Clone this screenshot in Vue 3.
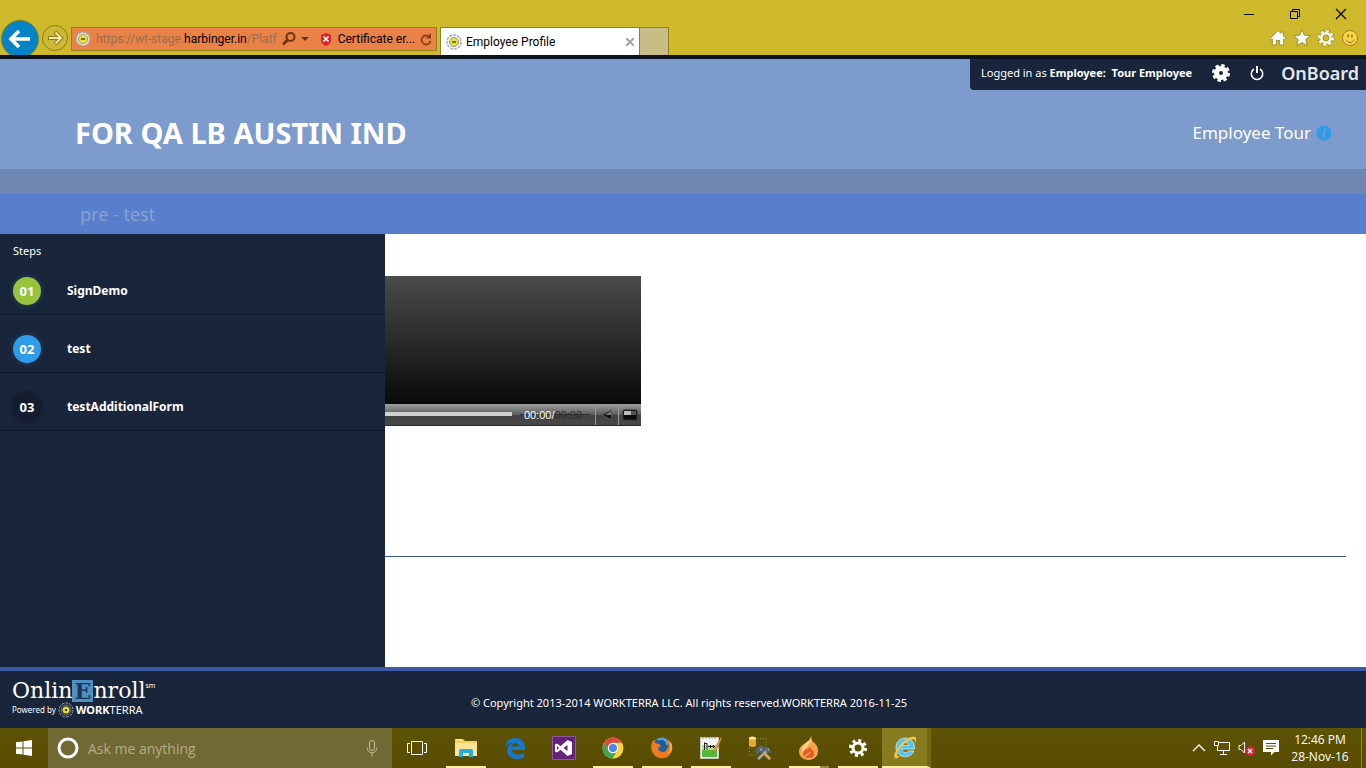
<template>
  <div class="screen">
    <header class="browser">
      <div class="nav-buttons">
        <button class="nav-back" aria-label="Back">
          <svg width="40" height="35" viewBox="0 0 40 35">
            <circle cx="20" cy="19" r="18.5" fill="#0683c6" stroke="#75801f" />
            <path d="M30 19H12M19 11l-8 8 8 8" fill="none" stroke="#fff" stroke-width="3.6" />
          </svg>
        </button>
        <button class="nav-forward" aria-label="Forward">
          <svg width="28" height="28" viewBox="0 0 28 28">
            <circle cx="14" cy="14" r="12.5" fill="#cdb934" stroke="#8d7d1b" />
            <path d="M7 14h13M14 8l6 6-6 6" fill="none" stroke="#8d7d1b" stroke-width="4" />
            <path d="M8 14h11M14.500 8.500l5.500 5.500-5.500 5.500" fill="none" stroke="#f3e9a4" stroke-width="2" />
          </svg>
        </button>
      </div>

      <div class="address">
        <svg class="favicon" width="16" height="16" viewBox="0 0 16 16">
          <circle cx="8" cy="8" r="7" fill="#eee0d0" stroke="#aaa092" stroke-width="1.500" stroke-dasharray="3 1" />
          <circle cx="8" cy="8" r="4.500" fill="#e9e13a" stroke="#9b9a83" />
          <path d="M6 8h4" stroke="#77751d" stroke-width="2" />
        </svg>
        <span class="url">https://wt-stage.<b>harbinger.in</b>/Platf</span>
        <button aria-label="Search">
          <svg width="14" height="14" viewBox="0 0 14 14" fill="none" stroke="#6b3512" stroke-width="2">
            <circle cx="8.500" cy="5" r="4" />
            <path d="M5.500 8L1 12.500" stroke-width="2.600" />
          </svg>
        </button>
        <button class="caret" aria-label="Show address list">
          <svg width="8" height="5" viewBox="0 0 8 5"><path d="M0 0h8L4 4z" fill="#6b3512" /></svg>
        </button>
        <button class="certificate">
          <svg width="12" height="13" viewBox="0 0 12 13">
            <path d="M6 0l5 2v5c0 3-2 5-5 6-3-1-5-3-5-6V2z" fill="#d3262b" />
            <path d="M3.500 3.500l5 5M8.500 3.500l-5 5" stroke="#fff" stroke-width="1.600" />
          </svg>
          Certificate er...
        </button>
        <button class="refresh" aria-label="Refresh">
          <svg width="12" height="13" viewBox="0 0 12 13">
            <path d="M9.500 4A4.500 4.500 0 1 0 10.500 8" fill="none" stroke="#8c4017" stroke-width="1.800" />
            <path d="M11 0v5.500H5.500z" fill="#8c4017" />
          </svg>
        </button>
      </div>

      <div class="tab">
        <svg width="16" height="16" viewBox="0 0 16 16">
          <circle cx="8" cy="8" r="7" fill="#fff" stroke="#aaa" stroke-width="1.500" stroke-dasharray="3 1" />
          <circle cx="8" cy="8" r="4.500" fill="#e9e13a" stroke="#8e8f92" />
          <path d="M6 8h4" stroke="#77751d" stroke-width="2" />
        </svg>
        <span>Employee Profile</span>
        <button aria-label="Close tab">
          <svg width="8" height="8" viewBox="0 0 8 8"><path d="M0 0l8 8M8 0L0 8" stroke="#a3a3a3" stroke-width="2" /></svg>
        </button>
      </div>
      <button class="new-tab" aria-label="New tab"></button>

      <div class="window-side">
        <div class="window-controls">
          <button aria-label="Minimize">
            <svg width="12" height="12" viewBox="0 0 12 12"><path d="M1 6.500h10" stroke="#000" /></svg>
          </button>
          <button aria-label="Restore">
            <svg width="12" height="12" viewBox="0 0 12 12" fill="none" stroke="#000">
              <path d="M1.500 3.500h7v7h-7zM3.500 3.500v-2h7v7h-2" />
            </svg>
          </button>
          <button aria-label="Close">
            <svg width="12" height="12" viewBox="0 0 12 12"><path d="M1 1l10 10M11 1L1 11" stroke="#000" stroke-width="1.200" /></svg>
          </button>
        </div>
        <div class="browser-tools">
          <button aria-label="Home">
            <svg width="18" height="18" viewBox="0 0 18 18">
              <path d="M9 1.500l3 2.800V3h2.300v3.500L17 9.700l-1.200 1.200-1.100-1V16h-4v-4.500H7.300V16h-4V9.900l-1.100 1L1 9.700z" fill="#fff" stroke="#8d7d1b" stroke-width=".8" />
            </svg>
          </button>
          <button aria-label="Favorites">
            <svg width="18" height="18" viewBox="0 0 18 18">
              <path d="M9 .5l2.300 5.700 6.200.4-4.700 4 1.500 6.100L9 13.400l-5.300 3.300 1.500-6.100-4.700-4 6.200-.4z" fill="#fff" stroke="#8d7d1b" stroke-width=".8" />
            </svg>
          </button>
          <button aria-label="Tools">
            <svg width="18" height="18" viewBox="0 0 18 18">
              <circle cx="9" cy="9" r="6.700" fill="none" stroke="#8d7d1b" stroke-width="3.600" stroke-dasharray="3.260 2" />
              <circle cx="9" cy="9" r="6.700" fill="none" stroke="#fff" stroke-width="2.600" stroke-dasharray="2.630 2.630" />
              <circle cx="9" cy="9" r="4.500" fill="none" stroke="#fff" stroke-width="2.600" />
              <circle cx="9" cy="9" r="3" fill="none" stroke="#8d7d1b" stroke-width=".6" />
            </svg>
          </button>
          <button aria-label="Send a smile">
            <svg width="18" height="18" viewBox="0 0 18 18">
              <circle cx="9" cy="9" r="7.500" fill="#f9d84a" stroke="#b0791f" />
              <path d="M5 10.500c1.500 4 6.500 4 8 0" fill="none" stroke="#9a6416" />
              <path d="M7 5.500v3M11 5.500v3" stroke="#9a6416" stroke-width="1.500" />
            </svg>
          </button>
        </div>
      </div>
    </header>

    <div class="banner">
      <div class="user-bar">
        <span>Logged in as <b>Employee:&nbsp; Tour Employee</b></span>
        <button aria-label="Settings">
          <svg width="18" height="18" viewBox="0 0 18 18" fill="none" stroke="#fff">
            <circle cx="9" cy="9" r="7.500" stroke-width="3" stroke-dasharray="3.400 2.490" />
            <circle cx="9" cy="9" r="4.500" stroke-width="5" />
          </svg>
        </button>
        <button aria-label="Log out">
          <svg width="14" height="16" viewBox="0 0 14 16" fill="none" stroke="#fff">
            <path d="M4 4a5.700 5.700 0 1 0 6 0" stroke-width="1.500" />
            <path d="M7 1v7" stroke-width="2" />
          </svg>
        </button>
        <span class="brand">OnBoard</span>
      </div>
      <div class="title-row">
        <h1>FOR QA LB AUSTIN IND</h1>
        <a href="#" class="tour">
          Employee Tour
          <svg width="16" height="16" viewBox="0 0 16 16">
            <circle cx="8" cy="8" r="7.500" fill="#309be8" />
            <path d="M9.200 3.300l-.4 2M8.400 6.500L7.200 12.500" stroke="#7a98d0" stroke-width="2" />
          </svg>
        </a>
      </div>
    </div>
    <div class="menu-strip"></div>
    <h2 class="page-title">pre - test</h2>

    <div class="body">
      <nav class="steps">
        <p>Steps</p>
        <ol>
          <li v-for="step in steps" :key="step.number">
            <a href="#">
              <span class="number" :class="step.state">{{ step.number }}</span>
              {{ step.name }}
            </a>
          </li>
        </ol>
      </nav>
      <main>
        <div class="player">
          <div class="video"></div>
          <div class="controls">
            <input type="range" min="0" max="100" value="0" aria-label="Seek">
            <div class="time"><span>00:00/</span><span class="duration">00:00</span></div>
            <button aria-label="Mute">
              <svg width="12" height="12" viewBox="0 0 12 12">
                <path d="M10.500 1v10L1 6z" fill="#111" stroke="#555" />
                <path d="M10 2v4H4z" fill="#777" />
              </svg>
            </button>
            <button aria-label="Full screen">
              <svg width="16" height="12" viewBox="0 0 16 12">
                <rect x="1" y="1" width="14" height="10" rx="1" fill="#0b0b0b" stroke="#333" />
                <path d="M9 2h5v4H9z" fill="#555" />
                <path d="M2 2h7v4H2z" fill="#bbb" />
              </svg>
            </button>
          </div>
        </div>
        <hr>
      </main>
    </div>

    <footer>
      <div class="logo">
        <div class="logo-name">Onlin<span class="logo-e">E</span>nroll<sup>sm</sup></div>
        <div class="powered">
          Powered by
          <svg width="16" height="16" viewBox="0 0 16 16">
            <circle cx="8" cy="8" r="7" fill="none" stroke="#9ba3ad" stroke-dasharray="3 1" />
            <circle cx="8" cy="8" r="5" fill="none" stroke="#6f7887" />
            <circle cx="8" cy="8" r="3.500" fill="#e4dc2c" />
            <path d="M7 8h2" stroke="#333" stroke-width="2" />
          </svg>
          <span class="workterra"><b>WORK</b>TERRA</span>
        </div>
      </div>
      <p>© Copyright 2013-2014 WORKTERRA LLC. All rights reserved.WORKTERRA 2016-11-25</p>
    </footer>

    <div class="taskbar">
      <button class="start" aria-label="Start">
        <svg width="16" height="16" viewBox="0 0 16 16" fill="#fff">
          <path d="M0 2.300l6.500-.9v6.100H0zM7.500 1.200L16 0v7.500H7.500zM0 8.500h6.500v6.100L0 13.700zM7.500 8.500H16V16l-8.500-1.200z" />
        </svg>
      </button>
      <label class="search">
        <svg width="22" height="22" viewBox="0 0 22 22"><circle cx="11" cy="11" r="9" fill="none" stroke="#fff" stroke-width="3" /></svg>
        <input type="text" placeholder="Ask me anything" aria-label="Ask me anything">
        <svg width="12" height="18" viewBox="0 0 12 18" fill="none" stroke="#c2bc9c">
          <rect x="3.500" y="1.500" width="5" height="10" rx="2.500" />
          <path d="M1 8.500c0 7 10 7 10 0M6 14v3.500" />
        </svg>
      </label>
      <button
        v-for="app in apps"
        :key="app.id"
        class="app"
        :class="{ running: app.running, active: app.active, stacked: app.stacked }"
        :aria-label="app.label"
      >
        <svg v-if="app.id === 'tasks'" width="20" height="16" viewBox="0 0 20 16" fill="none" stroke="#fff">
          <path d="M4.500 1.500h11v13h-11zM3 3.500H.500v9H3M17 3.500h2.500v9H17" />
        </svg>
        <svg v-else-if="app.id === 'explorer'" width="22" height="20" viewBox="0 0 22 20">
          <path d="M0 1h8l2 2h12v15H0z" fill="#f5cf65" />
          <path d="M0 5h22v13H0z" fill="#fbe49a" />
          <path d="M1 1.500h6" stroke="#fff3b5" />
          <path d="M4 19v-6q0-2 2-2h10q2 0 2 2v6h-4v-4H8v4z" fill="#27aee0" />
        </svg>
        <svg v-else-if="app.id === 'edge'" width="22" height="22" viewBox="0 0 22 22">
          <path d="M1 10C2 4 6 1 11 1c6 0 10 4 10 10v2H8c0 5 7 6 12 3v4.500C12 24 3 21 3 13.500 3 10 5 7.500 8 6 4.500 6 2.500 8 1 10zM8 9.500h7C15 4.500 8 4.500 8 9.500z" fill="#1378d0" />
        </svg>
        <svg v-else-if="app.id === 'studio'" width="24" height="24" viewBox="0 0 24 24">
          <path d="M.500.500h23v23H.500z" fill="#68217a" stroke="#8c5a9b" />
          <path d="M15.500 4L20 6v12l-4.500 2-7-6.300L5 16.500l-2-1v-7l2-1 3.500 2.800zM15.500 9L11.500 12l4 3zM5 10v4l2-2z" fill="#fff" fill-rule="evenodd" />
        </svg>
        <svg v-else-if="app.id === 'chrome'" width="22" height="22" viewBox="0 0 22 22">
          <circle cx="11" cy="11" r="10.500" fill="#ffd23e" />
          <path d="M1.900 5.800A10.500 10.500 0 0 1 20.100 5.800H11a5.200 5.200 0 0 0-4.500 7.800z" fill="#de4b3b" />
          <path d="M1.900 5.800A10.500 10.500 0 0 0 10.500 21.500l4.900-7.800a5.200 5.200 0 0 1-8.900 0z" fill="#3aa757" />
          <circle cx="11" cy="11" r="5.200" fill="#fff" />
          <circle cx="11" cy="11" r="4" fill="#4a85ed" />
        </svg>
        <svg v-else-if="app.id === 'firefox'" width="22" height="22" viewBox="0 0 22 22">
          <circle cx="11" cy="11" r="10.500" fill="#e66a18" />
          <circle cx="11" cy="9" r="8.300" fill="#245b9e" />
          <path d="M7 3c4-3 10 0 9 5" fill="none" stroke="#4eb0de" stroke-width="2" />
          <path d="M1 5l1.500-2L4 6l4 1 2 2-3 2c1 5 8 5 9 1 2-2 2-6 0-9 4 2 5 6 5 9a10.500 10.500 0 0 1-20 2C0 11 0 8 1 5z" fill="#ea7d21" />
          <path d="M17 4c4 4 3 10-1 13 5-1 6-7 4-11z" fill="#f9c63d" />
        </svg>
        <svg v-else-if="app.id === 'editor'" width="24" height="24" viewBox="0 0 24 24">
          <path d="M1.500 1.500h18v21h-18z" fill="#f3f5ef" stroke="#c7c9bf" />
          <path d="M3 12h15v9H3z" fill="#56b73d" />
          <path d="M3 9h15v5H3z" fill="#b5dc95" />
          <path d="M4 1v2M7 1v2M10 1v2M13 1v2M16 1v2" stroke="#999" />
          <path d="M5.500 6.500V14M5 7.500h3v6M9 10.500h7M11.500 9v3M14.500 9v3" stroke="#222" fill="none" />
          <path d="M22 1l-7 13-1 3 3-2 6-13z" fill="#e2a13a" stroke="#965f20" stroke-width=".5" />
        </svg>
        <svg v-else-if="app.id === 'database'" width="24" height="24" viewBox="0 0 24 24">
          <path d="M9 2.500h9v8M1.500 12v7h6" fill="none" stroke="#72a43a" stroke-dasharray="1 2" />
          <path d="M1 2q3.500-2 7 0v8q-3.500 2-7 0z" fill="#e9a92f" />
          <ellipse cx="4.500" cy="2" rx="3.500" ry="1.500" fill="#ffe49a" />
          <path d="M10 23l11-10M12 13l10 10" stroke="#9daebd" stroke-width="2.600" />
          <path d="M16 17l6 6" stroke="#d4a25e" stroke-width="2.600" />
          <path d="M8 14l5-4 4 3-3 3-3-1-2 2zM18 11l1 4 4 1" fill="none" stroke="#56697c" stroke-width="2" />
        </svg>
        <svg v-else-if="app.id === 'flame'" width="22" height="24" viewBox="0 0 22 24">
          <path d="M13 0c0 3 1 5 3.500 7 2.500 2 3.500 5 3.500 8 0 5.500-4 9-9.500 9S1 20.500 1 15C1 8 12 7 13 0z" fill="#f6a34a" />
          <path d="M13 0c1 6-10 7-9 15 1 5 4 8 9 8-8-2-8-7-4-12 4-4 5-7 4-11z" fill="#fcd28a" />
          <path d="M12 10c0 3 4 4 4 8 0 3-3 4-6 4s-5-2-5-5c0-4 6-3 7-7z" fill="#e9591c" />
          <path d="M12 16c0 3-5 2-5 5" fill="none" stroke="#f7a561" stroke-width="1.500" />
        </svg>
        <svg v-else-if="app.id === 'settings'" width="20" height="20" viewBox="0 0 20 20" fill="none" stroke="#fff">
          <circle cx="10" cy="10" r="5" stroke-width="3" />
          <circle cx="10" cy="10" r="7.600" stroke-width="3" stroke-dasharray="3 2.970" />
        </svg>
        <svg v-else width="24" height="24" viewBox="0 0 24 24">
          <path d="M12 3c6 0 10 4 9.500 11H9c0 4 5 5 6.500 2H21c-3 8-18 8-18-3.500C3 7 7 3 12 3zM9 10.500h6.500C15 6.500 9.500 6.500 9 10.500z" fill="#56c4ee" stroke="#d7f3ff" stroke-width=".7" />
          <path d="M2 23C-2 18 14-1 22 2c2 1 1 4 0 6 0-2 0-3-1-3.500C16 3 4 15 4 20c0 1 1 1.500 3 1-2 2-4 3-5 2z" fill="#f8c73b" />
        </svg>
      </button>

      <div class="tray">
        <button aria-label="Show hidden icons">
          <svg width="14" height="10" viewBox="0 0 14 10"><path d="M1 8l6-6 6 6" fill="none" stroke="#fff" stroke-width="1.300" /></svg>
        </button>
        <button aria-label="Network">
          <svg width="16" height="14" viewBox="0 0 16 14" fill="none" stroke="#fff">
            <path d="M5 1.500h10.500v8H3.500V5M.500.500h4v4h-4zM9.500 10v3M6 13.500h7" />
          </svg>
        </button>
        <button aria-label="Volume">
          <svg width="17" height="15" viewBox="0 0 17 15">
            <path d="M1 4.500h2L6.500 1v11L3 8.500H1z" fill="none" stroke="#fff" />
            <circle cx="12" cy="10" r="4.800" fill="#d62a3c" />
            <path d="M10 8l4 4M14 8l-4 4" stroke="#fff" stroke-width="1.300" />
          </svg>
        </button>
        <button aria-label="Notifications">
          <svg width="16" height="16" viewBox="0 0 16 16">
            <path d="M0 0h16v12h-4.500L8 15.500V12H0z" fill="#fff" />
            <path d="M3 3.500h10M3 6h10M3 8.500h7" stroke="#5b5008" />
          </svg>
        </button>
      </div>
      <div class="clock">
        <span>12:46 PM</span>
        <span>28-Nov-16</span>
      </div>
      <div class="show-desktop"></div>
    </div>
  </div>
</template>

<script setup>
const steps = [
  { number: '01', name: 'SignDemo', state: 'done' },
  { number: '02', name: 'test', state: 'current' },
  { number: '03', name: 'testAdditionalForm', state: 'pending' }
]

const apps = [
  { id: 'tasks', label: 'Task View' },
  { id: 'explorer', label: 'File Explorer', running: true },
  { id: 'edge', label: 'Microsoft Edge' },
  { id: 'studio', label: 'Visual Studio' },
  { id: 'chrome', label: 'Google Chrome', running: true },
  { id: 'firefox', label: 'Firefox', running: true },
  { id: 'editor', label: 'Notepad++', running: true },
  { id: 'database', label: 'SQL Server Management Studio' },
  { id: 'flame', label: 'Flame', running: true, stacked: true },
  { id: 'settings', label: 'Settings', running: true },
  { id: 'ie', label: 'Internet Explorer', active: true }
]
</script>

<style>
body {
  margin: 0;
}
</style>

<style scoped>
.screen {
  display: flex;
  flex-direction: column;
  min-height: 100vh;
  font-family: 'Noto Sans', sans-serif;
  font-size: 11px;
  color: #fff;
  background: #fff;
}

.screen * {
  box-sizing: border-box;
}

button {
  display: flex;
  align-items: center;
  justify-content: center;
  padding: 0;
  border: 0;
  background: none;
  font: inherit;
  color: inherit;
}

svg {
  display: block;
  flex: none;
}

a {
  color: inherit;
  text-decoration: none;
}

/* browser */
.browser {
  display: flex;
  align-items: flex-end;
  height: 55px;
  background: #cdb92b;
  color: #000;
  font-family: Roboto, 'Open Sans', sans-serif;
  font-size: 12px;
}

.nav-buttons {
  display: flex;
  gap: 1px;
  margin-right: 2px;
}

.nav-forward {
  align-self: center;
}

.address {
  display: flex;
  align-items: center;
  width: 366px;
  height: 24px;
  margin: 0 3px 4px 0;
  padding: 0 4px 0 3px;
  border: 1px solid #94801f;
  background: #ea8147;
}

.favicon {
  margin-right: 5px;
}

.url {
  flex: 1;
  color: #9a6d4c;
  white-space: nowrap;
}

.url b {
  color: #000;
  font-weight: 400;
}

.caret {
  margin: 0 11px 0 5px;
}

.certificate {
  gap: 6px;
  white-space: nowrap;
}

.refresh {
  margin-left: 5px;
}

.tab {
  display: flex;
  align-items: center;
  gap: 4px;
  width: 200px;
  height: 28px;
  padding: 0 5px;
  border: 1px solid #94801f;
  border-bottom: 0;
  background: #fff;
}

.tab span {
  flex: 1;
}

.new-tab {
  width: 29px;
  height: 28px;
  border: 1px solid #94801f;
  border-width: 1px 1px 0 0;
  background: #c8bd84;
}

.window-side {
  display: flex;
  flex-direction: column;
  align-items: flex-end;
  gap: 9px;
  margin-left: auto;
  padding: 0 7px 8px 0;
}

.window-controls {
  display: flex;
  gap: 34px;
  padding-right: 12px;
}

.browser-tools {
  display: flex;
  gap: 6px;
}

/* banner */
.banner {
  display: flex;
  flex-direction: column;
  height: 114px;
  border-top: 4px solid #0a1220;
  background: #7d9bcd;
}

.user-bar {
  display: flex;
  align-items: center;
  align-self: flex-end;
  height: 31px;
  padding: 0 7px 4px 11px;
  border-bottom-left-radius: 4px;
  background: #19253a;
}

.user-bar button {
  margin-left: 20px;
}

.brand {
  margin-left: 17px;
  color: #e2e5ea;
  font-size: 18px;
  font-weight: 600;
  line-height: 20px;
}

.title-row {
  display: flex;
  align-items: center;
  justify-content: space-between;
  flex: 1;
  padding: 6px 34px 0 75px;
}

h1 {
  margin: 0;
  font-size: 29px;
  line-height: 36px;
}

.tour {
  display: flex;
  align-items: center;
  gap: 5px;
  font-size: 17px;
}

.menu-strip {
  height: 25px;
  background: #6f87b2;
}

.page-title {
  margin: 0;
  padding: 1px 80px 0;
  background: #577fcd;
  color: #8ba0c9;
  font-size: 18px;
  font-weight: 400;
  line-height: 39px;
}

/* steps and content */
.body {
  display: flex;
  flex: 1;
}

.steps {
  flex: 0 0 385px;
  background: #19253a;
}

.steps p {
  margin: 0;
  padding: 9px 13px 0;
  line-height: 16px;
}

.steps ol {
  margin: 0;
  padding: 0;
  list-style: none;
}

.steps a {
  display: flex;
  align-items: center;
  gap: 23px;
  height: 58px;
  padding: 10px 10px 0;
  border-bottom: 1px solid #101a2c;
  font-size: 12px;
  font-weight: 700;
}

.steps li:first-child a {
  height: 56px;
  padding-top: 8px;
}

.number {
  display: flex;
  align-items: center;
  justify-content: center;
  width: 34px;
  height: 34px;
  border: 3px solid #1b2e43;
  border-radius: 50%;
  font-size: 13px;
}

.done {
  background: #98c33f;
}

.current {
  background: #309be8;
}

.pending {
  border-color: #171f33;
  background: #161c2f;
}

main {
  flex: 1;
  padding: 42px 20px 0 0;
}

.player {
  width: 256px;
}

.video {
  height: 128px;
  background: linear-gradient(#4b4b4b, #0a0a0a);
}

.controls {
  display: flex;
  align-items: stretch;
  height: 22px;
  border-bottom: 1px solid #292929;
  background: linear-gradient(#a0a0a0, #5c5c5c 50%, #424242 55%, #484848);
}

.controls input {
  align-self: center;
  flex: 1;
  min-width: 0;
  height: 4px;
  margin: 0 8px 2px 0;
  appearance: none;
  background: #d0d0d0;
}

.controls input::-webkit-slider-thumb {
  appearance: none;
  width: 0;
}

.time {
  display: flex;
  align-items: center;
  margin-right: 5px;
  padding: 0 4px;
  background: linear-gradient(#303030, #303030) center / 100% 1px no-repeat;
  font-family: 'Liberation Sans', sans-serif;
  font-size: 11px;
}

.duration {
  padding-right: 4px;
  color: #2d2d2d;
}

.controls button {
  width: 23px;
  border-left: 1px solid #999;
}

hr {
  margin: 130px 0 0;
  border: 0;
  border-top: 1px solid #3b5794;
}

/* footer */
footer {
  display: flex;
  align-items: center;
  height: 61px;
  padding-left: 12px;
  border-top: 4px solid #3a5ba3;
  background: #19253a;
}

.logo {
  width: 459px;
  padding-bottom: 2px;
}

.logo-name {
  display: flex;
  align-items: center;
  font-family: 'DejaVu Serif', serif;
  font-size: 22px;
  line-height: 22px;
}

.logo-e {
  width: 21px;
  background: #4f8fc2;
  color: #1d355a;
  font-weight: 700;
  text-align: center;
}

.logo sup {
  align-self: flex-start;
  font-family: 'Noto Sans', sans-serif;
  font-size: 7px;
  line-height: 12px;
}

.powered {
  display: flex;
  align-items: center;
  gap: 2px;
  font-size: 8px;
  line-height: 16px;
}

.workterra {
  font-size: 11px;
}

footer p {
  margin: 0;
  padding-top: 6px;
}

/* taskbar */
.taskbar {
  display: flex;
  height: 40px;
  background: linear-gradient(#5e5205, #584c03);
  font-family: 'Open Sans', sans-serif;
  font-size: 12px;
}

.start {
  width: 48px;
}

.search {
  display: flex;
  align-items: center;
  gap: 9px;
  width: 344px;
  padding: 0 14px 0 9px;
  background: #706933;
}

.search input {
  flex: 1;
  min-width: 0;
  padding: 0;
  border: 0;
  outline: 0;
  background: none;
  color: #fff;
  font: inherit;
  font-size: 14px;
}

.search input::placeholder {
  color: #b4ad87;
}

.app {
  width: 49px;
  border: 0 solid transparent;
}

.running {
  background: linear-gradient(#fcf0a0, #fcf0a0) center bottom / 40px 2px no-repeat;
}

.stacked {
  background: linear-gradient(90deg, #fcf0a0 31px, #988d4c 31px) center bottom / 40px 2px no-repeat;
}

.active {
  border-right: 4px solid #746815;
  border-bottom: 2px solid #fcf0a0;
  background: #877b20;
}

.tray {
  display: flex;
  align-items: center;
  gap: 8px;
  margin-left: auto;
}

.clock {
  display: flex;
  flex-direction: column;
  align-items: center;
  justify-content: center;
  width: 82px;
  line-height: 17px;
}

.show-desktop {
  width: 5px;
  border-left: 1px solid #8c834a;
}
</style>
